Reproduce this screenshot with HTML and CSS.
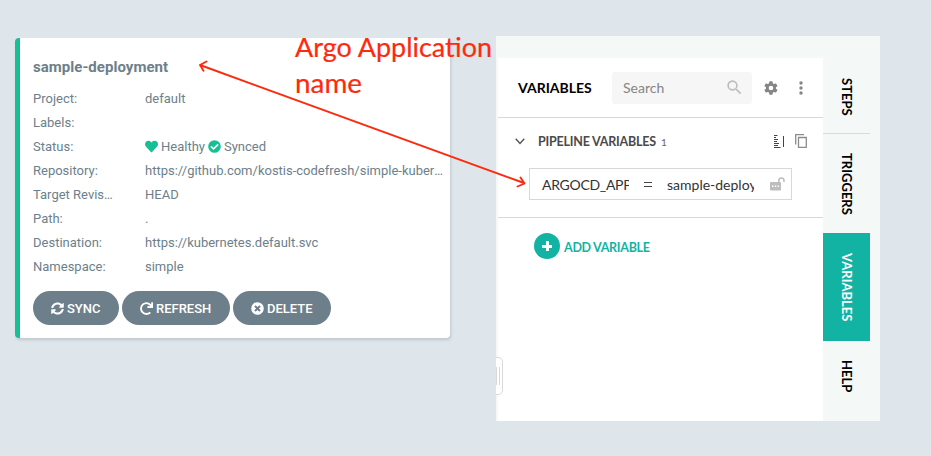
FILE: index.html
```html
<!DOCTYPE html>
<html lang="en">
<head>
<meta charset="utf-8">
<title>Argo application and pipeline variables</title>
<link rel="stylesheet" href="styles.css">
</head>
<body>
<main class="stage">
  <section class="app-card">
    <h2 class="app-title">sample-deployment</h2>
    <dl class="details">
      <dt>Project:</dt><dd>default</dd>
      <dt>Labels:</dt><dd></dd>
      <dt>Status:</dt>
      <dd class="status">
        <svg class="heart" viewBox="0 0 512 512"><path d="M462 62c-55-46-136-38-186 14l-20 20-20-20C186 24 105 16 50 62-13 116-16 212 40 270l193 200c13 13 33 13 46 0l193-200c56-58 53-154-10-208z"/></svg>
        <span>Healthy</span>
        <svg class="check" viewBox="0 0 512 512"><path d="M504 256a248 248 0 1 1-496 0 248 248 0 0 1 496 0zM227 387l184-184c7-6 7-16 0-22l-22-23c-7-6-17-6-23 0L216 308l-70-70c-6-6-16-6-23 0l-22 23c-7 6-7 16 0 22l104 104c6 7 16 7 22 0z"/></svg>
        <span>Synced</span>
      </dd>
      <dt>Repository:</dt><dd>https://github.com/kostis-codefresh/simple-kubernetes-app</dd>
      <dt>Target Revision:</dt><dd>HEAD</dd>
      <dt>Path:</dt><dd>.</dd>
      <dt>Destination:</dt><dd>https://kubernetes.default.svc</dd>
      <dt>Namespace:</dt><dd>simple</dd>
    </dl>
    <div class="actions">
      <button class="pill sync"><svg viewBox="0 0 512 512"><path d="M371 143c-32-30-73-46-116-46-78 0-145 54-163 127-1 5-6 9-12 9H24c-8 0-13-7-12-14C33 104 134 17 256 17c66 0 127 26 172 69l36-36c15-15 40-4 40 17v134c0 13-11 24-24 24H346c-21 0-32-26-17-41zM32 288h134c21 0 32 26 17 41l-42 41c32 30 73 46 116 46 78 0 145-54 163-127 1-5 6-9 12-9h56c8 0 13 7 12 14-21 115-122 202-244 202-66 0-127-26-172-69l-36 36c-15 15-40 4-40-17V312c0-13 11-24 24-24z"/></svg><span>SYNC</span></button>
      <button class="pill refresh"><svg viewBox="0 0 512 512"><path d="M500 8h-48c-7 0-12 6-12 12l4 83A248 248 0 1 0 422 441c5-5 5-13 0-18l-34-34c-4-4-12-5-17 0a176 176 0 1 1 34-222l-102-5c-6 0-12 5-12 12v47c0 7 6 12 12 12h197c7 0 12-5 12-12V20c0-6-5-12-12-12z"/></svg><span>REFRESH</span></button>
      <button class="pill delete"><svg viewBox="0 0 512 512"><path d="M256 8a248 248 0 1 0 0 496 248 248 0 0 0 0-496zm122 313c4 5 4 13 0 17l-40 40c-4 4-12 4-17 0l-65-66-65 66c-5 4-13 4-17 0l-40-40c-4-4-4-12 0-17l66-65-66-65c-4-5-4-13 0-17l40-40c4-4 12-4 17 0l65 66 65-66c5-4 13-4 17 0l40 40c4 4 4 12 0 17l-66 65z"/></svg><span>DELETE</span></button>
    </div>
  </section>

  <section class="panel">
    <div class="panel-body">
      <header class="panel-head">
        <h2>VARIABLES</h2>
        <div class="search">
          <span>Search</span>
          <svg viewBox="0 0 24 24"><path d="M15.5 14h-.8l-.3-.3a6.5 6.5 0 1 0-.7.7l.3.3v.8l5 5 1.500-1.500zm-6 0a4.500 4.500 0 1 1 0-9 4.500 4.500 0 0 1 0 9z"/></svg>
        </div>
        <svg class="gear" viewBox="0 0 24 24"><path d="M19.400 13a8 8 0 0 0 0-2l2.100-1.600a.5.5 0 0 0 .1-.7l-2-3.400a.5.5 0 0 0-.6-.2l-2.500 1a7 7 0 0 0-1.700-1l-.4-2.600a.5.5 0 0 0-.5-.5h-4a.5.5 0 0 0-.5.5L9 5.100a7 7 0 0 0-1.700 1l-2.500-1a.5.5 0 0 0-.6.200l-2 3.400a.5.5 0 0 0 .1.700L4.500 11a8 8 0 0 0 0 2l-2.200 1.600a.5.5 0 0 0-.1.700l2 3.400c.1.200.4.300.6.200l2.500-1a7 7 0 0 0 1.700 1l.4 2.600c0 .3.200.5.500.5h4c.3 0 .5-.2.500-.5l.4-2.600a7 7 0 0 0 1.700-1l2.500 1c.2.100.5 0 .6-.2l2-3.400a.5.5 0 0 0-.1-.7zM12 15.500a3.500 3.500 0 1 1 0-7 3.500 3.500 0 0 1 0 7z"/></svg>
        <svg class="dots" viewBox="0 0 4 14"><circle cx="2" cy="2" r="1.700"/><circle cx="2" cy="7" r="1.700"/><circle cx="2" cy="12" r="1.700"/></svg>
      </header>
      <div class="group">
        <div class="group-head">
          <svg class="chevron" viewBox="0 0 10 7"><path d="M.7.7 5 5.500 9.300.7"/></svg>
          <h3>PIPELINE VARIABLES</h3>
          <span class="count">1</span>
          <svg class="bulk" viewBox="0 0 11 13"><path d="M0 .5h3.500M0 2.500h2M0 4.500h4M0 6.500h3M0 8.500h5M0 10.500h4M0 12.500h6.500"/><path d="M9.500 1v11"/></svg>
          <svg class="copy" viewBox="0 0 12 14"><path d="M.7 10.500V.7h8.300M3.500 3.500h7.800v9.800H3.500z"/></svg>
        </div>
        <div class="variable">
          <span class="key">ARGOCD_APP</span>
          <span class="eq"></span>
          <span class="value">sample-deployment</span>
          <svg class="lock" viewBox="0 0 15 14"><path class="shackle" d="M8.800 5V3.500a2.600 2.600 0 0 1 5.200 0V5"/><rect y="5" width="11" height="8.500" rx="1"/><path class="pins" d="M2 9.300h1.500M4.800 9.300h1.500M7.600 9.300h1.500"/></svg>
        </div>
      </div>
      <div class="add">
        <span class="plus"></span>
        <span class="add-label">ADD VARIABLE</span>
      </div>
    </div>
    <nav class="tabs">
      <div class="tab steps"><span>STEPS</span></div>
      <div class="tab triggers"><span>TRIGGERS</span></div>
      <div class="tab active"><span>VARIABLES</span></div>
      <div class="tab help"><span>HELP</span></div>
    </nav>
    <div class="handle"></div>
  </section>

  <svg class="annotation" viewBox="0 0 931 456">
    <text x="295" y="57" textLength="197" lengthAdjust="spacingAndGlyphs">Argo Application</text>
    <text x="295" y="93" textLength="67" lengthAdjust="spacingAndGlyphs">name</text>
    <path d="M200 65 524 183M206.500 61.500 200 65l3.500 5.700M517.500 186.500 524.500 183.500l-4-6"/>
  </svg>
</main>
</body>
</html>
```
FILE: styles.css
```css
* { box-sizing: border-box; }
body { margin: 0; background: #dee5eb; }
h2, h3, dl, dd { margin: 0; }
svg { display: block; flex: none; fill: currentColor; }

.stage {
  position: relative;
  display: flex;
  align-items: flex-start;
  gap: 46px;
  width: 931px;
  height: 456px;
  padding: 36px 0 0 15px;
  overflow: hidden;
}

.app-card {
  width: 435px;
  height: 300px;
  margin-top: 2px;
  padding: 17px 7px 0 13px;
  border-left: 5px solid #18be94;
  border-radius: 4px;
  background: #fff;
  box-shadow: 1px 2px 3px rgba(0, 0, 0, .13);
  color: #6d7f8b;
  font: 13px/24px Roboto, sans-serif;
}
.app-title { height: 32px; font-size: 15px; line-height: 24px; letter-spacing: .03px; }
.details { display: grid; grid-template-columns: 80px 298px; column-gap: 32px; grid-auto-rows: 24px; }
.details dt, .details dd { overflow: hidden; white-space: nowrap; text-overflow: ellipsis; }
.status { display: flex; align-items: center; gap: 3px; }
.status svg { width: 13px; height: 13px; margin-top: -1px; color: #18be94; }
.actions { display: flex; gap: 3px; margin-top: 12px; }
.pill {
  display: flex;
  align-items: center;
  gap: 3px;
  height: 34px;
  padding: 0 0 0 18px;
  border: 0;
  border-radius: 17px;
  background: #6d7f8b;
  color: #fff;
  font: 500 13px Roboto, sans-serif;
}
.pill svg { width: 13px; height: 13px; }
.sync { width: 86px; }
.refresh { width: 108px; }
.delete { width: 98px; }

.panel {
  position: relative;
  display: flex;
  width: 384px;
  height: 385px;
  padding: 22px 10px 0 2px;
  background: #f4f8f7;
  font-family: Lato, sans-serif;
}
.panel-body { width: 325px; background: #fff; }
.panel-head { display: flex; align-items: center; height: 60px; padding-left: 20px; border-bottom: 1px solid #d8d8d8; }
.panel-head h2 { width: 94px; color: #000; font-size: 14px; line-height: 20px; }
.search {
  display: flex;
  align-items: center;
  justify-content: space-between;
  width: 140px;
  height: 32px;
  padding: 0 8px 0 11px;
  border-radius: 3px;
  background: #f6f6f6;
  color: #858585;
  font-size: 14px;
}
.search svg { width: 19px; height: 19px; color: #bdbdbd; }
.gear { width: 16px; height: 16px; margin-left: 11px; color: #858585; }
.dots { width: 4px; height: 14px; margin-left: 20px; color: #858585; }
.group { height: 100px; padding: 12px 12px 0 17px; border-bottom: 1px solid #d8d8d8; }
.group-head { display: flex; align-items: center; height: 24px; }
.chevron { width: 10px; height: 7px; margin-top: -1px; fill: none; stroke: #555; stroke-width: 1.4; }
.group h3 { width: 117px; margin: -1px 0 0 13px; color: #4a4a4a; font-size: 12.500px; letter-spacing: -.22px; white-space: nowrap; }
.count { width: 12px; margin: -1px 0 0 6px; color: #666; font-size: 10px; }
.bulk { width: 11px; height: 13px; margin: -1px 0 0 101px; fill: none; stroke: #444; }
.copy { width: 12px; height: 14px; margin: -2px 0 0 10px; fill: none; stroke: #8c8c8c; stroke-width: 1.3; }
.variable {
  display: flex;
  align-items: center;
  width: 263px;
  height: 32px;
  margin: 14px 0 0 14px;
  padding-left: 12px;
  border: 1px solid #d6d8d9;
  color: #333;
  font-size: 14px;
  line-height: 20px;
}
.key, .value { padding-top: 2px; overflow: hidden; white-space: nowrap; }
.key { width: 87px; letter-spacing: -.3px; }
.eq { width: 8px; height: 5px; margin-left: 15px; border: solid #444; border-width: 1.500px 0; }
.value { width: 87px; margin-left: 15px; }
.lock { width: 15px; height: 14px; margin-left: 16px; color: #bdbdbd; }
.shackle { fill: none; stroke: currentColor; stroke-width: 1.5; }
.pins { stroke: #fff; stroke-width: 1.5; }
.add { display: flex; align-items: center; gap: 4px; padding: 15px 0 0 36px; color: #12b3a3; font-size: 12.500px; font-weight: bold; }
.add-label { padding-top: 2px; letter-spacing: -.3px; }
.plus {
  width: 26px;
  height: 26px;
  border-radius: 50%;
  background:
    linear-gradient(#fff, #fff) center / 10px 3px no-repeat,
    linear-gradient(#fff, #fff) center / 3px 10px no-repeat,
    #12b3a3;
}
.tabs { width: 47px; color: #000; font-size: 13px; font-weight: bold; line-height: 16px; }
.tab { display: flex; justify-content: center; padding-top: 20px; }
.tab span { writing-mode: vertical-rl; white-space: nowrap; }
.steps { height: 76px; border-bottom: 1px solid #d8dcdb; }
.triggers { height: 99px; padding-top: 19px; }
.active { height: 108px; background: #12b3a3; color: #fff; }
.help { height: 80px; padding-top: 19px; }
.handle {
  position: absolute;
  left: 0;
  top: 321px;
  width: 7px;
  height: 38px;
  border: 1px solid #d9d9d9;
  border-left: 0;
  border-radius: 0 5px 5px 0;
  background:
    linear-gradient(#d9d9d9, #d9d9d9) 0 9px / 1px 18px no-repeat,
    linear-gradient(#d9d9d9, #d9d9d9) 3px 9px / 1px 18px no-repeat,
    #fff;
}

.annotation { position: absolute; left: 0; top: 0; width: 931px; height: 456px; }
.annotation text { fill: #ff2a0d; stroke: #ff2a0d; stroke-width: .2; font: 27.500px Lato, sans-serif; }
.annotation path { fill: none; stroke: #ff2a0d; stroke-width: 1.9; stroke-linecap: round; stroke-linejoin: round; }
```
